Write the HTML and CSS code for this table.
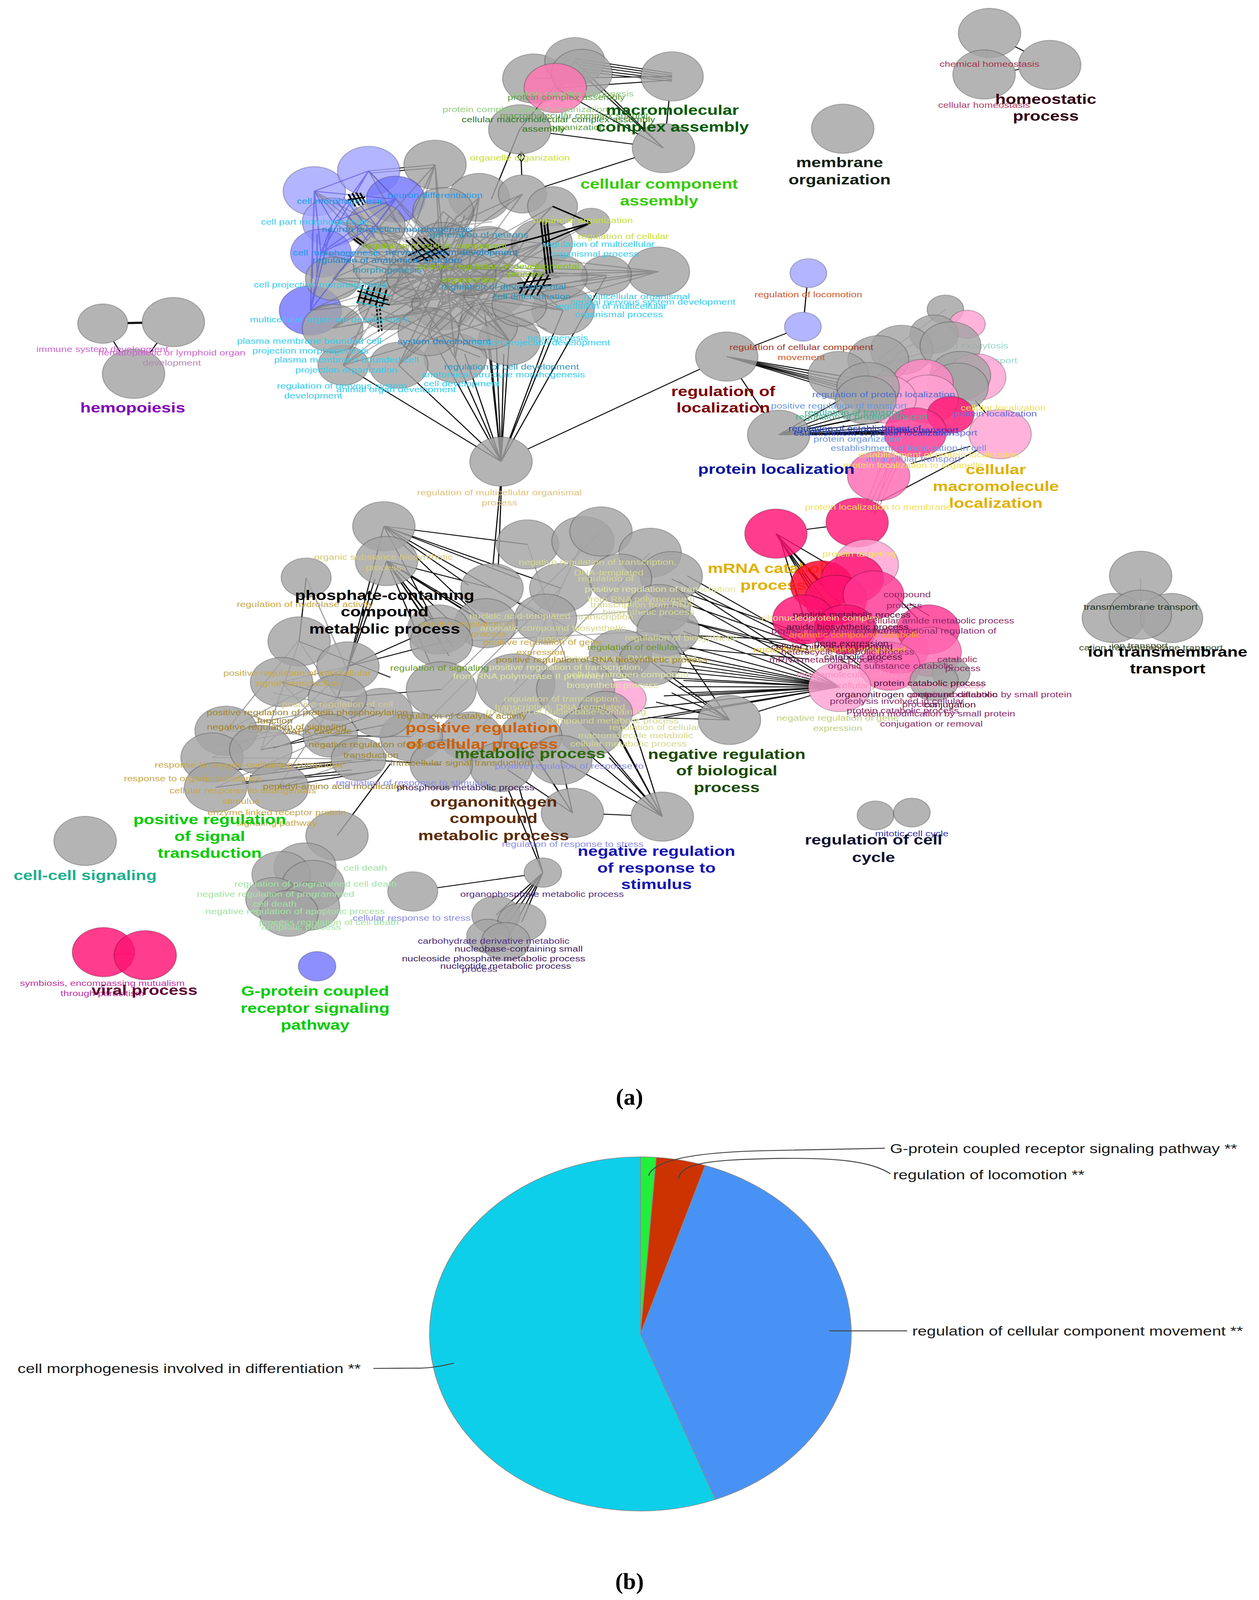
FILE: index.html
```html
<!DOCTYPE html>
<html lang="en">
<head>
<meta charset="utf-8">
<title>GO term network and pie chart</title>
<link rel="stylesheet" href="styles.css">
</head>
<body>
<main class="page">
<figure class="panel">
<svg class="net" viewBox="0 0 3224 3508" preserveAspectRatio="none" xmlns="http://www.w3.org/2000/svg">
<!-- edges under nodes -->
<path class="e" d="M291 1109L307 1142M402 1114L384 1146M2600 152L2622 166M2599 228L2609 225M1470 190L1721 238M1475 200L1721 245M1480 210L1721 252M1485 222L1721 258M1490 232L1721 264M1367 255L1721 248M1422 286L1721 260M1422 286L1699 481M1490 240L1699 481M1472 199L1699 481M1410 433L1620 468M1713 328L1707 401M1334 500L1336 568M1331 420L1258 647M1625 512L1395 606M1472 199L1331 420M944 555L1114 535M950 562L1110 545M879 1186L1283 1499M1021 1186L1283 1499M1097 1077L1283 1499M1166 1163L1283 1499M1190 1150L1283 1499M1250 1060L1283 1499M1304 1106L1283 1499M1290 1150L1283 1499M1442 1008L1283 1499M1400 1100L1283 1499M1553 894L1283 1499M1266 945L1283 1499M1240 1000L1283 1499M1792 1199L1352 1458M1281 1579L1262 1840M1284 1579L1276 1840M1898 1229L1957 1341M2014 1082L1933 1122M2066 934L2060 1014M1861 1158L2147 1219M1861 1158L2160 1235M1861 1158L2170 1250M1861 1158L2190 1265M1861 1158L2210 1280M1861 1158L2230 1300M1861 1158L2240 1240M1994 1412L2150 1300M1994 1412L2180 1320M1994 1412L2210 1335M1994 1412L2230 1350M1994 1412L2260 1370M1994 1412L2290 1385M1994 1412L2320 1395M1994 1412L2350 1400M1994 1412L2380 1402M1994 1412L2410 1404M1994 1412L2440 1400M1994 1412L2200 1360M1994 1412L2250 1400M1994 1412L2300 1410M2498 1302L2530 1350M2485 1449L2332 1506M2504 1461L2255 1627M2116 1711L2066 1719M1987 1733L2104 1901M1987 1733L2125 1920M1987 1733L2140 1948M1995 1740L2060 2010M1987 1733L2165 2044M1987 1733L2183 1879M1987 1733L2150 1960M1987 1733L2110 1990M1987 1733L2090 1930M2150 2231L1740 1890M2150 2231L1760 1950M2150 2231L1740 2000M2150 2231L1750 2050M2150 2231L1760 2100M2150 2231L1750 2140M2150 2231L1720 2180M2150 2231L1700 2200M2150 2231L1740 2230M2150 2231L1760 2250M2150 2231L1700 2260M2150 2231L1720 2290M2150 2231L1650 2300M2150 2231L1700 2330M2150 2231L1620 2340M2150 2231L1750 2210M2150 2231L1730 2120M2150 2231L1770 2160M2150 2231L1690 2160M2150 2231L1780 2260M2070 2100L1720 1880M2070 2100L1730 1950M2065 2090L1760 1870M2070 2110L1700 2000M2075 2080L1690 2060M2070 2120L1760 2020M2060 2060L1740 1920M2070 2140L1710 2100M1711 2047L1868 2338M1665 2147L1868 2338M1700 2200L1868 2338M1720 2250L1868 2338M1740 2300L1868 2338M1680 2280L1868 2338M1660 2330L1868 2338M1943 2310L2075 2259M1512 2376L1696 2652M1550 2315L1696 2652M1436 2468L1696 2652M1480 2420L1696 2652M1590 2400L1696 2652M1620 2350L1696 2652M1560 2460L1696 2652M1436 2468L1466 2640M1383 2480L1466 2640M1359 2430L1466 2640M1300 2500L1466 2640M1546 2644L1616 2648M983 1709L1351 1768M983 1709L1260 1910M983 1709L1436 1910M983 1709L1397 2009M983 1709L1244 2024M983 1709L1300 1850M983 1709L1330 1880M983 1709L1200 1900M983 1709L1123 2044M990 1822L1260 1910M990 1822L1244 2024M990 1822L1130 2086M990 1822L1123 2044M990 1822L1200 1980M990 1822L1180 2050M990 1822L1210 2000M990 1822L1160 2100M990 1822L1100 2150M990 1822L1150 2130M960 1880L889 2174M990 1822L864 2266M983 1709L891 2164M784 1876L766 2083M846 2389L1053 2392M918 2465L1130 2483M864 2266L1130 2239M891 2164L1130 2086M891 2164L1099 2047M766 2083L1000 2200M721 2215L960 2300M700 2430L976 2315M712 2557L976 2500M668 2435L1000 2350M552 2557L900 2500M600 2500L900 2470M640 2520L880 2480M620 2540L930 2510M700 2500L950 2470M863 2714L1000 2480M1120 2883L1343 2843M1390 2834L1330 2560M1390 2834L1300 2560M1390 2834L1270 2972M1390 2834L1336 2995M1390 2834L1295 3058M1390 2834L1250 3040M1385 2840L1300 3000M2330 1960L2380 2000M2290 1930L2350 2010M2150 2140L2190 2170M2170 2130L2200 2160"/>
<path class="e6" d="M327 1049L364 1048"/>
<path class="eg" d="M766 2083L864 2266M721 2215L891 2164M891 2164L579 2373M864 2266L543 2460M579 2373L846 2389M543 2460L918 2465M552 2557L846 2389M712 2557L918 2465M668 2435L891 2164M721 2215L846 2389M766 2083L668 2435M784 1876L889 2174M763 2082L579 2373M864 2266L712 2557M600 2300L918 2465M640 2350L860 2300M700 2250L900 2300M560 2420L880 2350M1260 1910L1589 2124M1351 1768L1474 2239M1493 1757L1321 2223M1665 1795L1206 2392M1244 2024L1688 1978M1130 2086L1711 2047M1436 1910L1053 2392M1539 1726L1130 2239M2392 1085L2309 1136M2421 1005L2249 1168M2434 1123L2147 1219M2309 1136L2223 1257M2459 1219L2268 1296M2921 1880L2921 1960M2860 2000L2915 1990M2925 1990L2990 2000M2528 188L2526 162"/>
<path class="ep" d="M2290 1470L2220 1660M2300 1480L2230 1665M2270 1475L2210 1660M2285 1465L2240 1670M2310 1475L2250 1650M2230 1780L2170 1900M2250 1790L2200 1880"/>
<path class="ev" d="M292 3098L344 3100"/>
<path class="e" d="M1335 493L1344 509L1335 525L1326 509Z"/>
<!-- labels drawn beneath nodes -->
<text class="b m B-mrna" x="1980" y="1861">mRNA catabolic</text>
<text class="b m B-mrna" x="1980" y="1916">process</text>
<text class="s t-tl" x="2345" y="1131">regulated exocytosis</text>
<text class="s t-tl" x="2300" y="1180">vesicle-mediated transport</text>
<text class="s t-tm" x="2375" y="1236">secretion</text>
<!-- nodes -->
<g class="n">
<circle class="g" cx="263" cy="1051" r="64"/>
<circle class="g" cx="444" cy="1046" r="80"/>
<circle class="g" cx="342" cy="1214" r="80"/>
<circle class="g" cx="2534" cy="107" r="80"/>
<circle class="g" cx="2688" cy="211" r="80"/>
<circle class="g" cx="2520" cy="242" r="80"/>
<circle class="g" cx="2158" cy="418" r="80"/>
<circle class="g" cx="1367" cy="255" r="80"/>
<circle class="g" cx="1472" cy="199" r="77"/>
<circle class="g" cx="1490" cy="238" r="78"/>
<circle class="pa" cx="1422" cy="286" r="80"/>
<circle class="g" cx="1331" cy="420" r="80"/>
<circle class="g" cx="1721" cy="248" r="80"/>
<circle class="g" cx="1699" cy="481" r="80"/>
<circle class="bl" cx="805" cy="621" r="80"/>
<circle class="bl" cx="944" cy="555" r="80"/>
<circle class="g" cx="1114" cy="535" r="80"/>
<circle class="bm" cx="1013" cy="647" r="75"/>
<circle class="bl" cx="852" cy="721" r="78"/>
<circle class="bm2" cx="822" cy="822" r="78"/>
<circle class="bm" cx="795" cy="1008" r="80"/>
<circle class="g" cx="1227" cy="641" r="78"/>
<circle class="g" cx="1338" cy="630" r="62"/>
<circle class="g" cx="1415" cy="670" r="64"/>
<circle class="g" cx="1514" cy="724" r="48"/>
<circle class="g" cx="1686" cy="882" r="80"/>
<circle class="g" cx="1553" cy="894" r="64"/>
<circle class="g" cx="1442" cy="1008" r="80"/>
<circle class="g" cx="1304" cy="1106" r="80"/>
<circle class="g" cx="1166" cy="1163" r="80"/>
<circle class="g" cx="1021" cy="1186" r="75"/>
<circle class="g" cx="879" cy="1186" r="65"/>
<circle class="g" cx="852" cy="1066" r="78"/>
<circle class="g" cx="852" cy="905" r="70"/>
<circle class="g" cx="963" cy="733" r="75"/>
<circle class="g" cx="1135" cy="687" r="78"/>
<circle class="g" cx="1135" cy="802" r="80"/>
<circle class="g" cx="983" cy="859" r="78"/>
<circle class="g" cx="998" cy="991" r="80"/>
<circle class="g" cx="1135" cy="991" r="80"/>
<circle class="g" cx="1266" cy="945" r="80"/>
<circle class="g" cx="1250" cy="813" r="78"/>
<circle class="g" cx="1388" cy="790" r="78"/>
<circle class="g" cx="1434" cy="899" r="70"/>
<circle class="g" cx="1097" cy="1077" r="78"/>
<circle class="g" cx="1250" cy="1060" r="75"/>
<circle class="g" cx="1060" cy="900" r="70"/>
<circle class="g" cx="1200" cy="890" r="70"/>
<circle class="g" cx="1330" cy="990" r="70"/>
<circle class="g" cx="1283" cy="1499" r="80"/>
<circle class="bl" cx="2070" cy="887" r="47"/>
<circle class="bl" cx="2056" cy="1061" r="47"/>
<circle class="g" cx="1861" cy="1158" r="80"/>
<circle class="g" cx="1994" cy="1412" r="80"/>
<circle class="g" cx="2421" cy="1005" r="47"/>
<circle class="pl" cx="2477" cy="1053" r="46"/>
<circle class="g" cx="2392" cy="1085" r="62"/>
<circle class="g" cx="2309" cy="1136" r="80"/>
<circle class="g" cx="2249" cy="1168" r="78"/>
<circle class="g" cx="2147" cy="1219" r="78"/>
<circle class="g" cx="2434" cy="1123" r="78"/>
<circle class="pl" cx="2500" cy="1225" r="76"/>
<circle class="g" cx="2459" cy="1219" r="78"/>
<circle class="g" cx="2453" cy="1257" r="78"/>
<circle class="pm2" cx="2363" cy="1245" r="78"/>
<circle class="pl" cx="2376" cy="1296" r="78"/>
<circle class="pl" cx="2268" cy="1296" r="78"/>
<circle class="g" cx="2223" cy="1257" r="80"/>
<circle class="g" cx="2217" cy="1299" r="78"/>
<circle class="ph" cx="2434" cy="1347" r="60"/>
<circle class="pq" cx="2344" cy="1404" r="80"/>
<circle class="pl" cx="2561" cy="1410" r="80"/>
<circle class="pm" cx="2250" cy="1546" r="80"/>
<circle class="ph" cx="2195" cy="1697" r="80"/>
<circle class="ph" cx="1987" cy="1733" r="80"/>
<circle class="pl" cx="2219" cy="1834" r="82"/>
<circle class="pr" cx="2104" cy="1901" r="80"/>
<circle class="ph" cx="2183" cy="1879" r="80"/>
<circle class="ph" cx="2140" cy="1948" r="80"/>
<circle class="pq" cx="2237" cy="1932" r="78"/>
<circle class="ph" cx="2058" cy="2012" r="80"/>
<circle class="ph" cx="2165" cy="2044" r="80"/>
<circle class="pm" cx="2300" cy="2110" r="78"/>
<circle class="pq" cx="2377" cy="2044" r="80"/>
<circle class="pm" cx="2382" cy="2117" r="80"/>
<circle class="pm" cx="2278" cy="2164" r="78"/>
<circle class="pl" cx="2150" cy="2231" r="80"/>
<circle class="g" cx="2436" cy="2187" r="48"/>
<circle class="g" cx="2392" cy="2213" r="62"/>
<circle class="g" cx="2921" cy="1870" r="80"/>
<circle class="g" cx="2851" cy="2007" r="80"/>
<circle class="g" cx="3000" cy="2007" r="80"/>
<circle class="g" cx="2920" cy="1996" r="80"/>
<circle class="pl" cx="1595" cy="2270" r="60"/>
<circle class="g" cx="983" cy="1709" r="80"/>
<circle class="g" cx="990" cy="1822" r="80"/>
<circle class="g" cx="784" cy="1876" r="64"/>
<circle class="g" cx="1351" cy="1768" r="80"/>
<circle class="g" cx="1493" cy="1757" r="80"/>
<circle class="g" cx="1539" cy="1726" r="80"/>
<circle class="g" cx="1665" cy="1795" r="80"/>
<circle class="g" cx="1719" cy="1871" r="80"/>
<circle class="g" cx="1260" cy="1910" r="80"/>
<circle class="g" cx="1436" cy="1910" r="80"/>
<circle class="g" cx="1589" cy="1879" r="80"/>
<circle class="g" cx="1688" cy="1978" r="80"/>
<circle class="g" cx="1711" cy="2047" r="80"/>
<circle class="g" cx="1397" cy="2009" r="80"/>
<circle class="g" cx="1244" cy="2024" r="80"/>
<circle class="g" cx="1123" cy="2044" r="80"/>
<circle class="g" cx="1130" cy="2086" r="80"/>
<circle class="g" cx="1589" cy="2124" r="80"/>
<circle class="g" cx="1665" cy="2147" r="80"/>
<circle class="g" cx="1130" cy="2239" r="90"/>
<circle class="g" cx="1321" cy="2223" r="100"/>
<circle class="g" cx="1474" cy="2239" r="100"/>
<circle class="g" cx="1550" cy="2315" r="70"/>
<circle class="g" cx="1512" cy="2376" r="80"/>
<circle class="g" cx="1359" cy="2392" r="80"/>
<circle class="g" cx="1206" cy="2392" r="80"/>
<circle class="g" cx="1053" cy="2392" r="80"/>
<circle class="g" cx="976" cy="2315" r="80"/>
<circle class="g" cx="1436" cy="2468" r="80"/>
<circle class="g" cx="1283" cy="2491" r="80"/>
<circle class="g" cx="1130" cy="2483" r="80"/>
<circle class="g" cx="766" cy="2083" r="80"/>
<circle class="g" cx="721" cy="2215" r="80"/>
<circle class="g" cx="891" cy="2164" r="80"/>
<circle class="g" cx="864" cy="2266" r="75"/>
<circle class="g" cx="579" cy="2373" r="80"/>
<circle class="g" cx="543" cy="2460" r="80"/>
<circle class="g" cx="668" cy="2435" r="80"/>
<circle class="g" cx="846" cy="2389" r="70"/>
<circle class="g" cx="918" cy="2465" r="70"/>
<circle class="g" cx="552" cy="2557" r="80"/>
<circle class="g" cx="712" cy="2557" r="78"/>
<circle class="g" cx="1868" cy="2338" r="80"/>
<circle class="g" cx="1466" cy="2640" r="80"/>
<circle class="g" cx="1696" cy="2652" r="80"/>
<circle class="g" cx="863" cy="2714" r="80"/>
<circle class="g" cx="781" cy="2817" r="80"/>
<circle class="g" cx="720" cy="2840" r="75"/>
<circle class="g" cx="802" cy="2874" r="80"/>
<circle class="g" cx="699" cy="2920" r="70"/>
<circle class="g" cx="792" cy="2943" r="78"/>
<circle class="g" cx="740" cy="2966" r="75"/>
<circle class="g" cx="1057" cy="2895" r="64"/>
<circle class="g" cx="1390" cy="2834" r="48"/>
<circle class="g" cx="1270" cy="2972" r="62"/>
<circle class="g" cx="1336" cy="2995" r="62"/>
<circle class="g" cx="1250" cy="3040" r="55"/>
<circle class="g" cx="1295" cy="3058" r="62"/>
<circle class="g" cx="2242" cy="2648" r="47"/>
<circle class="g" cx="2335" cy="2639" r="47"/>
<circle class="g" cx="218" cy="2731" r="80"/>
<circle class="ph" cx="265" cy="3092" r="80"/>
<circle class="ph" cx="372" cy="3102" r="80"/>
<circle class="bm" cx="812" cy="3138" r="48"/>
</g>
<!-- edges drawn over the development cluster -->
<path class="eo" d="M1114 535L998 991M1114 535L1135 991M1114 535L879 1186M1227 641L1021 1186M1227 641L852 1066M944 555L1135 802M944 555L1135 991M805 621L983 859M805 621L1266 945M852 721L1388 790M852 721L1434 899M822 822L1250 813M822 822L1442 1008M795 1008L1135 802M795 1008L1266 945M795 1008L1388 790M852 1066L1415 670M852 1066L1553 894M879 1186L1135 687M879 1186L1250 813M1021 1186L1388 790M1021 1186L1338 630M1166 1163L963 733M1166 1163L1114 535M1304 1106L1013 647M1304 1106L963 733M1304 1106L852 905M1250 1060L805 621M1250 1060L852 721M1097 1077L1227 641M1097 1077L1415 670M852 905L1686 882M852 905L1553 894M983 859L1686 882M998 991L1434 899M1135 991L1514 724M1135 687L1442 1008M1135 802L1304 1106M1686 882L1135 802M1686 882L998 991M1553 894L983 859M1442 1008L852 905M1442 1008L963 733M1434 899L822 822M1514 724L998 991M1415 670L1021 1186M1338 630L852 1066M1227 641L1166 1163M1686 882L879 1186M1686 882L852 1066M1388 790L879 1186M1338 630L852 905M1114 535L852 905M1000 700L1180 940M1020 690L1200 930M1040 690L1220 920M980 760L1260 720M990 780L1280 740M1000 960L1260 760M1010 975L1280 775M1150 700L1050 1000M1170 700L1070 1000M1190 700L1090 1000M900 1100L1200 860M910 1120L1220 880M1180 1050L1330 760M1200 1060L1350 770M960 1000L1240 1140M950 1020L1230 1160M1220 1000L1380 1080M1240 990L1400 1070"/>
<path class="eb" d="M805 621L944 555M805 621L1013 647M805 621L852 721M944 555L852 721M944 555L822 822M1013 647L852 721M1013 647L822 822M852 721L822 822M822 822L795 1008M805 621L822 822M944 555L1013 647M852 721L795 1008M1013 647L963 733M822 822L963 733M805 621L795 1008M1013 647L795 1008M800 760L800 905M812 760L812 900M860 650L940 780M880 640L960 770M900 630L980 760"/>
<path class="et" d="M1040 780L1095 848M1055 775L1110 843M1070 772L1125 840M1085 772L1140 838M1100 775L1150 830M1045 830L1115 790M1055 845L1130 800M1070 850L1150 805M930 925L915 985M945 928L930 988M960 930L945 990M975 935L962 992M990 940L978 995M915 945L995 975M918 965L998 990M1330 955L1360 885M1345 958L1375 888M1360 960L1390 890M1375 960L1405 892M1325 920L1410 905M1330 935L1412 925M892 630L910 670M902 627L920 667M912 625L930 665M922 626L936 660M890 650L935 640M1385 720L1400 890M1393 720L1408 888M1401 722L1415 885M905 775L925 795M912 772L932 790M1388 790L1514 724M1415 670L1514 724M1250 813L1514 724"/>
<path class="ed" d="M972 990L978 1078M964 992L970 1078"/>
<path class="ec" d="M920 935L1000 960M912 980L985 1000M925 950L990 985"/>
<!-- labels -->
<g class="labels">
<text class="s m t-mg" x="262" y="1143">immune system development</text>
<text class="s m t-mg" x="440" y="1154">hematopoietic or lymphoid organ</text>
<text class="s m t-mg2" x="440" y="1187">development</text>
<text class="b m B-hemo" x="340" y="1339">hemopoiesis</text>
<text class="s m t-hm" x="2534" y="217">chemical homeostasis</text>
<text class="s m t-hm2" x="2520" y="350">cellular homeostasis</text>
<text class="b m B-home" x="2678" y="337">homeostatic</text>
<text class="b m B-home" x="2678" y="392">process</text>
<text class="b m B-mem" x="2150" y="543">membrane</text>
<text class="b m B-mem" x="2150" y="599">organization</text>
<text class="s m t-g1" x="1465" y="313">protein complex biogenesis</text>
<text class="s m t-g2" x="1450" y="325">protein complex assembly</text>
<text class="s m t-g1" x="1345" y="364">protein complex subunit organization</text>
<text class="s m t-g2" x="1470" y="384">macromolecular complex subunit</text>
<text class="s m t-g3" x="1430" y="397">cellular macromolecular complex assembly</text>
<text class="s m t-g2" x="1478" y="422">organization</text>
<text class="s m t-g3" x="1392" y="427">assembly</text>
<text class="s m t-yg" x="1331" y="522">organelle organization</text>
<text class="b m B-mac" x="1722" y="373">macromolecular</text>
<text class="b m B-mac" x="1722" y="427">complex assembly</text>
<text class="b m B-cca" x="1688" y="613">cellular component</text>
<text class="b m B-cca" x="1688" y="667">assembly</text>
<text class="s t-bu" x="760" y="662">cell morphogenesis</text>
<text class="s t-bu" x="992" y="643">neuron differentiation</text>
<text class="s t-cy" x="668" y="730">cell part morphogenesis</text>
<text class="s t-bu2" x="824" y="754">neuron projection morphogenesis</text>
<text class="s t-bu3" x="1100" y="771">generation of neurons</text>
<text class="s t-yg" x="1365" y="724">organelle organization</text>
<text class="s t-yg" x="1480" y="776">regulation of cellular</text>
<text class="s t-cy" x="1389" y="802">regulation of multicellular</text>
<text class="s t-cy" x="1410" y="834">organismal process</text>
<text class="s t-lg" x="930" y="807">regulation of cellular component</text>
<text class="s t-bu2" x="987" y="828">nervous system development</text>
<text class="s t-bu" x="750" y="830">cell morphogenesis</text>
<text class="s t-bu2" x="800" y="854">regulation of anatomical structure</text>
<text class="s t-lg" x="1069" y="874">positive regulation of developmental</text>
<text class="s t-bu3" x="902" y="886">morphogenesis</text>
<text class="s t-lg" x="1300" y="898">process</text>
<text class="s t-lg" x="1131" y="917">organization</text>
<text class="s t-cy" x="650" y="934">cell projection morphogenesis</text>
<text class="s t-bu3" x="1130" y="940">regulation of developmental</text>
<text class="s t-bu3" x="1260" y="972">cell differentiation</text>
<text class="s t-cy" x="1495" y="972">multicellular organismal</text>
<text class="s t-cy" x="1460" y="990">central nervous system development</text>
<text class="s t-cy" x="1420" y="1004">regulation of multicellular</text>
<text class="s t-cy" x="1472" y="1030">organismal process</text>
<text class="s t-cy" x="640" y="1047">multicellular organism development</text>
<text class="s t-cy" x="1350" y="1106">neurogenesis</text>
<text class="s t-bu2" x="1018" y="1118">system development</text>
<text class="s t-cy" x="1205" y="1121">neuron projection development</text>
<text class="s t-cy" x="607" y="1116">plasma membrane bounded cell</text>
<text class="s t-cy" x="646" y="1148">projection morphogenesis</text>
<text class="s t-cy" x="702" y="1177">plasma membrane bounded cell</text>
<text class="s t-bu3" x="1137" y="1200">regulation of cell development</text>
<text class="s t-cy" x="756" y="1210">projection organization</text>
<text class="s t-cy" x="1079" y="1226">anatomical structure morphogenesis</text>
<text class="s t-cy" x="1085" y="1255">cell development</text>
<text class="s t-cy" x="709" y="1262">regulation of nervous system</text>
<text class="s t-cy" x="861" y="1274">animal organ development</text>
<text class="s m t-cy" x="802" y="1294">development</text>
<text class="s m t-or" x="1279" y="1609">regulation of multicellular organismal</text>
<text class="s m t-or" x="1279" y="1642">process</text>
<text class="s m t-rl" x="2070" y="965">regulation of locomotion</text>
<text class="s m t-rc" x="2052" y="1136">regulation of cellular component</text>
<text class="s m t-rl" x="2052" y="1169">movement</text>
<text class="b m B-rol" x="1852" y="1286">regulation of</text>
<text class="b m B-rol" x="1852" y="1340">localization</text>
<text class="s t-pb" x="2080" y="1290">regulation of protein localization</text>
<text class="s t-pb3" x="1974" y="1327">positive regulation of transport</text>
<text class="s t-tm" x="2060" y="1349">regulation of transport</text>
<text class="s t-tm" x="2037" y="1363">regulation of protein transport</text>
<text class="s t-yl" x="2460" y="1333">cellular localization</text>
<text class="s t-pv2" x="2440" y="1352">protein localization</text>
<text class="s t-pb2" x="2019" y="1400">regulation of establishment of</text>
<text class="s t-pb4" x="2265" y="1405">protein transport</text>
<text class="s t-pb2" x="2032" y="1415">establishment of protein localization</text>
<text class="s t-pv2" x="2400" y="1414">transport</text>
<text class="s t-pb3" x="2083" y="1435">protein organization</text>
<text class="s t-pb3" x="2127" y="1464">establishment of localization in cell</text>
<text class="s t-yl" x="2198" y="1486">establishment of protein localization</text>
<text class="s t-pv" x="2217" y="1500">intracellular transport</text>
<text class="s t-yl" x="2159" y="1520">protein localization to organelle</text>
<text class="b m B-pl" x="1988" y="1539">protein localization</text>
<text class="b m B-cml" x="2550" y="1540">cellular</text>
<text class="b m B-cml" x="2550" y="1595">macromolecule</text>
<text class="b m B-cml" x="2550" y="1649">localization</text>
<text class="s m t-yl" x="2249" y="1655">protein localization to membrane</text>
<text class="s m t-yl" x="2200" y="1808">protein targeting</text>
<text class="s t-pp" x="2262" y="1940">compound</text>
<text class="s t-pp" x="2270" y="1975">process</text>
<text class="s m t-pp2" x="2181" y="2005">peptide metabolic process</text>
<text class="s t-yl2" x="1950" y="2016">ribonucleoprotein complex</text>
<text class="s t-pp" x="2220" y="2025">cellular amide metabolic process</text>
<text class="s m t-pp2" x="2170" y="2045">amide biosynthetic process</text>
<text class="s t-pp" x="1975" y="2058">peptide biosynthetic process</text>
<text class="s t-pp" x="2190" y="2058">posttranscriptional regulation of</text>
<text class="s t-orn" x="2020" y="2070">aromatic compound catabolic</text>
<text class="s m t-pp2" x="2180" y="2098">gene expression</text>
<text class="s m t-pp2" x="2130" y="2110">cellular nitrogen compound</text>
<text class="s t-yl3" x="1930" y="2118">nucleobase-containing compound</text>
<text class="s t-pp" x="2000" y="2126">heterocycle catabolic process</text>
<text class="s t-pp2" x="2110" y="2142">catabolic process</text>
<text class="s t-pp" x="1970" y="2152">mRNA metabolic process</text>
<text class="s t-pp" x="2120" y="2172">organic substance catabolic</text>
<text class="s t-pkc" x="2040" y="2200">macromolecule catabolic</text>
<text class="s t-pp" x="2400" y="2150">catabolic</text>
<text class="s t-pp" x="2420" y="2180">process</text>
<text class="s t-pkc" x="2143" y="2235">cellular protein catabolic process</text>
<text class="s t-pp2" x="2237" y="2228">protein catabolic process</text>
<text class="s t-pp2" x="2140" y="2264">organonitrogen compound catabolic</text>
<text class="s t-pp" x="2330" y="2264">protein modification by small protein</text>
<text class="s t-pp" x="2125" y="2286">proteolysis involved in cellular</text>
<text class="s t-pp" x="2310" y="2296">process</text>
<text class="s t-pp2" x="2366" y="2297">conjugation</text>
<text class="s t-pp" x="2168" y="2316">protein catabolic process</text>
<text class="s t-pp" x="2185" y="2326">protein modification by small protein</text>
<text class="s m t-ng" x="2145" y="2341">negative regulation of gene</text>
<text class="s m t-pp" x="2385" y="2359">conjugation or removal</text>
<text class="s m t-ng" x="2145" y="2373">expression</text>
<text class="s m t-ion" x="2921" y="1980">transmembrane transport</text>
<text class="s t-ion2" x="2763" y="2112">cation transmembrane transport</text>
<text class="s t-ion2" x="2846" y="2106">ion transport</text>
<text class="b m B-ion" x="2990" y="2132">ion transmembrane</text>
<text class="b m B-ion" x="2990" y="2187">transport</text>
<text class="s m t-gd3" x="982" y="1818">organic substance biosynthetic</text>
<text class="s m t-gd3" x="982" y="1852">process</text>
<text class="s t-pa" x="1328" y="1834">negative regulation of transcription,</text>
<text class="s t-pa" x="1470" y="1868">DNA-templated</text>
<text class="s t-pa" x="1480" y="1888">regulation of</text>
<text class="s t-pa2" x="1497" y="1922">positive regulation of transcription</text>
<text class="s t-pa" x="1504" y="1955">from RNA polymerase II</text>
<text class="s t-pa" x="1512" y="1972">transcription from RNA</text>
<text class="s t-pa" x="1543" y="1997">biosynthetic process</text>
<text class="s t-pa" x="1202" y="2009">nucleic acid-templated</text>
<text class="s t-pa" x="1480" y="2012">transcription</text>
<text class="s t-gd" x="1076" y="2035">positive regulation of</text>
<text class="s t-pa" x="1229" y="2049">aromatic compound biosynthetic</text>
<text class="s t-gd" x="1206" y="2068">process</text>
<text class="s t-pa" x="1600" y="2080">regulation of biosynthetic</text>
<text class="s m t-pa" x="1420" y="2082">process</text>
<text class="s t-gd" x="1237" y="2095">positive regulation of gene</text>
<text class="s t-dg" x="1504" y="2111">regulation of cellular</text>
<text class="s m t-gd" x="1385" y="2127">expression</text>
<text class="s t-pa" x="1450" y="2146">transcription, DNA-templated</text>
<text class="s t-gd2" x="1270" y="2152">positive regulation of RNA biosynthetic process</text>
<text class="s t-dg" x="999" y="2178">regulation of signaling</text>
<text class="s t-pa2" x="1252" y="2175">positive regulation of transcription,</text>
<text class="s t-pa2" x="1451" y="2200">cellular nitrogen compound</text>
<text class="s t-pa2" x="1160" y="2205">from RNA polymerase II promoter</text>
<text class="s t-pa2" x="1451" y="2234">biosynthetic process</text>
<text class="s t-pa" x="1290" y="2278">regulation of transcription,</text>
<text class="s t-pa" x="1267" y="2305">transcription, DNA-templated</text>
<text class="s t-pa" x="1244" y="2320">regulation of nucleobase-containing</text>
<text class="s t-pa" x="1400" y="2350">compound metabolic process</text>
<text class="s t-pa" x="1560" y="2371">regulation of cellular</text>
<text class="s t-pa" x="1480" y="2397">macromolecule metabolic</text>
<text class="s t-pa" x="1460" y="2424">cellular metabolic process</text>
<text class="s m t-gd" x="781" y="1971">regulation of hydrolase activity</text>
<text class="s m t-gd" x="761" y="2194">positive regulation of intracellular</text>
<text class="s m t-gd" x="761" y="2227">signal transduction</text>
<text class="s m t-gd4" x="864" y="2296">positive regulation of cell</text>
<text class="s t-gd2" x="529" y="2323">positive regulation of protein phosphorylation</text>
<text class="s t-gd2" x="1018" y="2334">regulation of catalytic activity</text>
<text class="s m t-gd2" x="704" y="2350">function</text>
<text class="s m t-gd2" x="709" y="2370">negative regulation of signaling</text>
<text class="s m t-gd2" x="812" y="2384">MAPK cascade</text>
<text class="s t-gd2" x="790" y="2427">negative regulation of signal</text>
<text class="s m t-gd2" x="950" y="2461">transduction</text>
<text class="s t-gd2" x="1000" y="2486">intracellular signal transduction</text>
<text class="s t-gd" x="396" y="2493">response to oxygen-containing compound</text>
<text class="s t-gd" x="317" y="2537">response to organic substance</text>
<text class="s t-gd2" x="673" y="2563">peptidyl-amino acid modification</text>
<text class="s t-gd" x="434" y="2577">cellular response to endogenous</text>
<text class="s m t-gd" x="617" y="2611">stimulus</text>
<text class="s m t-gd" x="709" y="2648">enzyme linked receptor protein</text>
<text class="s m t-gd" x="709" y="2682">signaling pathway</text>
<text class="s t-pv" x="1267" y="2496">positive regulation of response to</text>
<text class="s t-pv" x="860" y="2551">regulation of response to stimulus</text>
<text class="s t-pr2" x="1016" y="2566">phosphorus metabolic process</text>
<text class="s t-pv" x="1285" y="2750">regulation of response to stress</text>
<text class="b m B-pcc" x="985" y="1948">phosphate-containing</text>
<text class="b m B-pcc" x="985" y="2002">compound</text>
<text class="b m B-pcc" x="985" y="2057">metabolic process</text>
<text class="b m B-prc" x="1234" y="2378">positive regulation</text>
<text class="b m B-prc" x="1234" y="2432">of cellular process</text>
<text class="b m B-mp" x="1357" y="2462">metabolic process</text>
<text class="b m B-onc" x="1264" y="2619">organonitrogen</text>
<text class="b m B-onc" x="1264" y="2673">compound</text>
<text class="b m B-onc" x="1264" y="2729">metabolic process</text>
<text class="b m B-nrb" x="1861" y="2465">negative regulation</text>
<text class="b m B-nrb" x="1861" y="2518">of biological</text>
<text class="b m B-nrb" x="1861" y="2573">process</text>
<text class="b m B-nrr" x="1681" y="2780">negative regulation</text>
<text class="b m B-nrr" x="1681" y="2834">of response to</text>
<text class="b m B-nrr" x="1681" y="2887">stimulus</text>
<text class="s m t-mc" x="2335" y="2716">mitotic cell cycle</text>
<text class="b m B-rcc" x="2237" y="2743">regulation of cell</text>
<text class="b m B-rcc" x="2237" y="2800">cycle</text>
<text class="s t-ld" x="880" y="2828">cell death</text>
<text class="s t-ld" x="600" y="2880">regulation of programmed cell death</text>
<text class="s t-ld" x="504" y="2912">negative regulation of programmed</text>
<text class="s m t-ld" x="704" y="2944">cell death</text>
<text class="s t-ld" x="526" y="2969">negative regulation of apoptotic process</text>
<text class="s t-pv" x="903" y="2990">cellular response to stress</text>
<text class="s t-ld" x="663" y="3004">process</text>
<text class="s t-ld" x="760" y="3004">regulation of cell death</text>
<text class="s m t-ld" x="771" y="3019">apoptotic process</text>
<text class="s m t-pr" x="1388" y="2912">organophosphate metabolic process</text>
<text class="s m t-pr" x="1264" y="3065">carbohydrate derivative metabolic</text>
<text class="s m t-pr2" x="1328" y="3090">nucleobase-containing small</text>
<text class="s m t-pr2" x="1264" y="3122">nucleoside phosphate metabolic process</text>
<text class="s m t-pr2" x="1295" y="3146">nucleotide metabolic process</text>
<text class="s m t-pr" x="1228" y="3156">process</text>
<text class="b m B-ccs" x="218" y="2858">cell-cell signaling</text>
<text class="b m B-prs" x="537" y="2677">positive regulation</text>
<text class="b m B-prs" x="537" y="2731">of signal</text>
<text class="b m B-prs" x="537" y="2786">transduction</text>
<text class="s m t-pkm" x="262" y="3202">symbiosis, encompassing mutualism</text>
<text class="s m t-pkm" x="262" y="3235">through parasitism</text>
<text class="b m B-vir" x="370" y="3231">viral process</text>
<text class="b m B-gp" x="807" y="3234">G-protein coupled</text>
<text class="b m B-gp" x="807" y="3289">receptor signaling</text>
<text class="b m B-gp" x="807" y="3344">pathway</text>
</g>
</svg>
<figcaption class="cap">(a)</figcaption>
</figure>
<figure class="panel">
<svg class="pie" viewBox="0 3618 3224 1462" preserveAspectRatio="none" xmlns="http://www.w3.org/2000/svg">
<path class="sl s-green" d="M1640 4332L1640 3757A540 575 0 0 1 1680.5 3758.6Z"/>
<path class="sl s-red" d="M1640 4332L1680.5 3758.6A540 575 0 0 1 1806 3785Z"/>
<path class="sl s-blue" d="M1640 4332L1806 3785A540 575 0 0 1 1832 4869.5Z"/>
<path class="sl s-cyan" d="M1640 4332L1832 4869.5A540 575 0 1 1 1640 3757Z"/>
<path class="lead" d="M1661 3818Q1680 3745 1953 3737L2266 3729"/>
<path class="lead" d="M1737 3829C1745 3780 1800 3766 2000 3762C2140 3760 2230 3770 2280 3812"/>
<path class="lead" d="M2124 4322L2323 4322"/>
<path class="lead" d="M1162 4427C1120 4440 1090 4444 1069 4443L956 4444"/>
<text class="pl-t" x="2279" y="3745">G-protein coupled receptor signaling pathway **</text>
<text class="pl-t" x="2287" y="3830">regulation of locomotion **</text>
<text class="pl-t" x="2336" y="4337">regulation of cellular component movement **</text>
<text class="pl-t" x="45" y="4459">cell morphogenesis involved in differentiation **</text>
</svg>
<figcaption class="cap">(b)</figcaption>
</figure>
</main>
</body>
</html>
```
FILE: styles.css
```css
html, body {
  margin: 0;
  padding: 0;
  background: #ffffff;
}
body {
  width: 3224px;
  font-family: "Liberation Sans", Arial, sans-serif;
}
.page {
  display: flex;
  flex-direction: column;
  width: 3224px;
}
.panel {
  margin: 0;
  padding: 0;
  display: flex;
  flex-direction: column;
}
/* the figure fills the window height: 5196 reference rows are spread over 100vh */
.net {
  display: block;
  width: 3224px;
  height: calc(100vh * 3508 / 5196);
}
.pie {
  display: block;
  width: 3224px;
  height: calc(100vh * 1462 / 5196);
}
.cap {
  height: calc(100vh * 110 / 5196);
  line-height: calc(100vh * 110 / 5196);
  text-align: center;
  font-family: "Liberation Serif", "Times New Roman", serif;
  font-weight: bold;
  font-size: calc(100vh * 76 / 5196);
  color: #000;
}

/* edges */
.e { fill: none; stroke: #111; stroke-width: 3; }
.e6 { fill: none; stroke: #111; stroke-width: 7; }
.eg { fill: none; stroke: #555; stroke-opacity: 0.55; stroke-width: 3; }
.eo { fill: none; stroke: #6a6a6a; stroke-opacity: 0.5; stroke-width: 3.5; }
.eb { fill: none; stroke: #5050e0; stroke-opacity: 0.6; stroke-width: 3.5; }
.et { fill: none; stroke: #000; stroke-width: 4.5; }
.ed { fill: none; stroke: #000; stroke-width: 4; stroke-dasharray: 7 6; }
.ec { fill: none; stroke: #20c8e0; stroke-width: 3; }
.ep { fill: none; stroke: #c04080; stroke-opacity: 0.55; stroke-width: 2.5; }
.ev { fill: none; stroke: #c0206a; stroke-width: 2.5; }

/* nodes */
.n circle { fill-opacity: 0.82; stroke: #000; stroke-opacity: 0.22; stroke-width: 3; }
.n .g { fill: #a3a3a3; }
.n .bl { fill: #a2a5ff; }
.n .bm { fill: #7476ff; }
.n .bm2 { fill: #8a8cff; }
.n .pl { fill: #ffa2d2; }
.n .pm { fill: #ff6ab2; }
.n .pm2 { fill: #ff88c4; }
.n .ph { fill: #ff1273; }
.n .pq { fill: #ff3691; }
.n .pr { fill: #ff002a; }
.n .pa { fill: #ff74b2; }

/* label text */
text.s { font-family: "Liberation Sans", Arial, sans-serif; font-size: 26px; }
text.b { font-family: "Liberation Sans", Arial, sans-serif; font-size: 44px; font-weight: bold; }
text.m { text-anchor: middle; }

.t-mg { fill: #cc66cc; }
.t-mg2 { fill: #b587b5; }
.t-hm { fill: #a83050; }
.t-hm2 { fill: #b83a5a; }
.t-g1 { fill: #96cc86; }
.t-g2 { fill: #5aa048; }
.t-g3 { fill: #2e7a20; }
.t-yg { fill: #c8e040; }
.t-cy { fill: #33ccee; }
.t-bu { fill: #1a9af0; }
.t-bu2 { fill: #1a88d0; }
.t-bu3 { fill: #2a98c0; }
.t-lg { fill: #88c400; }
.t-or { fill: #e0c080; }
.t-rl { fill: #d0582a; }
.t-rc { fill: #a0341a; }
.t-tl { fill: #98d8c8; }
.t-tm { fill: #40b090; }
.t-pb { fill: #4a70d0; }
.t-pb2 { fill: #2040c0; }
.t-pb3 { fill: #6a98e0; }
.t-pb4 { fill: #3030c8; }
.t-pv { fill: #8a8ae8; }
.t-pv2 { fill: #6666e0; }
.t-yl { fill: #f0e060; }
.t-yl2 { fill: #f4e890; }
.t-yl3 { fill: #f0c020; }
.t-pp { fill: #8a2a6a; }
.t-pp2 { fill: #501038; }
.t-pkc { fill: #ff90c0; }
.t-orn { fill: #ff9a30; }
.t-ng { fill: #c0d080; }
.t-ion { fill: #203020; }
.t-ion2 { fill: #3e5030; }
.t-mc { fill: #3333aa; }
.t-gd { fill: #c8a848; }
.t-gd2 { fill: #a08428; }
.t-gd3 { fill: #d8c878; }
.t-gd4 { fill: #d8c890; }
.t-pa { fill: #d4d890; }
.t-pa2 { fill: #e0e6a0; }
.t-dg { fill: #6a9a20; }
.t-pr { fill: #503080; }
.t-pr2 { fill: #402060; }
.t-ld { fill: #a0e4a0; }
.t-pkm { fill: #c030a0; }

.B-hemo { fill: #8000b8; }
.B-mac { fill: #005a00; }
.B-cca { fill: #33cc00; }
.B-mem { fill: #102010; }
.B-home { fill: #300010; }
.B-rol { fill: #7a0000; }
.B-pl { fill: #0010a0; }
.B-cml { fill: #e0b000; }
.B-mrna { fill: #e0b000; }
.B-ion { fill: #000000; }
.B-pcc { fill: #000000; }
.B-prc { fill: #d06000; }
.B-mp { fill: #2a6a00; }
.B-onc { fill: #5a2a00; }
.B-nrb { fill: #1a4a00; }
.B-nrr { fill: #1414b4; }
.B-rcc { fill: #101030; }
.B-ccs { fill: #1fb08c; }
.B-prs { fill: #00cc00; }
.B-vir { fill: #600030; }
.B-gp { fill: #00cc00; }

/* pie */
.sl { stroke: #8a8a8a; stroke-width: 2; }
.s-green { fill: #22ee3c; }
.s-red { fill: #cc3300; }
.s-blue { fill: #4892f6; }
.s-cyan { fill: #0ecfe9; }
.lead { fill: none; stroke: #444; stroke-width: 3; }
.pl-t { font-family: "Liberation Sans", Arial, sans-serif; font-size: 42px; fill: #1a1a1a; }
```
